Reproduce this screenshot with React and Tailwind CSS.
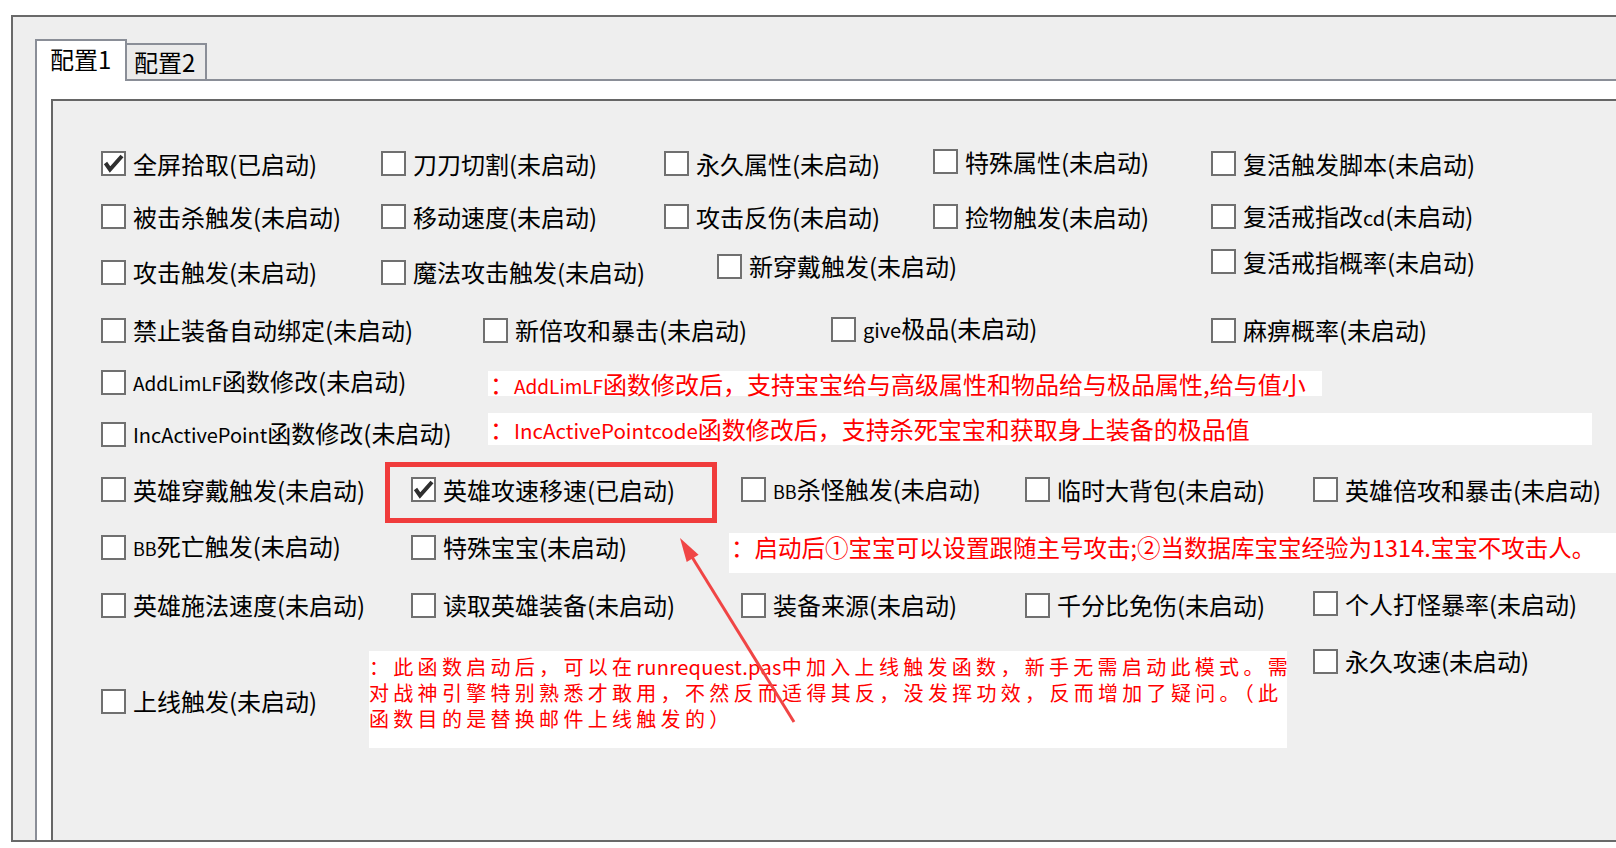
import React from "react";

function Item({ label, checked = false, className = "" }) {
  return (
    <div className={"flex items-center shrink-0 h-[32px] " + className}>
      <div className="relative w-[25px] h-[25px] shrink-0 border-2 border-[#707070] bg-white">
        {checked && (
          <svg width="25" height="25" viewBox="0 0 25 25" className="absolute -left-[2px] -top-[2px]">
            <polyline points="4.5,12 9,18.5 21,5" fill="none" stroke="#2f2f2f" strokeWidth="4" strokeLinejoin="miter" strokeLinecap="butt" />
          </svg>
        )}
      </div>
      <span className="ml-[7px] text-[24px] leading-[32px] text-black whitespace-nowrap">{label}</span>
    </div>
  );
}

export default function App() {
  return (
    <div className="relative w-[1616px] h-[848px] overflow-hidden bg-white font-['Noto_Sans_CJK_SC',sans-serif]">
      <div className="ml-[11px] mt-[15px] w-[1660px] h-[827px] border-2 border-[#696969] bg-[#eeeeee] pt-[22px] pl-[22px] flex flex-col">
        {/* tab header */}
        <div className="flex items-end h-[42px] shrink-0">
          <div className="w-[92px] h-[42px] bg-white border-l-2 border-t-2 border-r-2 border-[#8a8e97] pl-[13px] pt-[2px] text-[24px] leading-[32px] text-black whitespace-nowrap">
            配置1
          </div>
          <div className="w-[80px] h-[38px] bg-[#ebebeb] border-t-2 border-r-2 border-b-2 border-[#8a8e97] pl-[7px] pt-[1px] text-[24px] leading-[32px] text-black whitespace-nowrap">
            配置2
          </div>
          <div className="flex-1 h-[2px] bg-[#8a8e97]" />
        </div>
        {/* panel */}
        <div className="flex-1 flex flex-col bg-white border-l-2 border-[#8a8e97] pt-[18px] pl-[14px]">
          <div className="flex-1 border-t-2 border-l-2 border-[#666666] bg-[#efefef] pt-[36px] flex flex-col">
            {/* row 1 */}
            <div className="flex items-center h-[53px] pl-[48px] shrink-0">
              <Item label="全屏拾取(已启动)" checked className="w-[280px]" />
              <Item label="刀刀切割(未启动)" className="w-[283px]" />
              <Item label="永久属性(未启动)" className="w-[269px]" />
              <Item label="特殊属性(未启动)" className="w-[278px] mb-[4px]" />
              <Item label="复活触发脚本(未启动)" />
            </div>
            {/* row 2 */}
            <div className="flex items-center h-[53px] pl-[48px] shrink-0">
              <Item label="被击杀触发(未启动)" className="w-[280px]" />
              <Item label="移动速度(未启动)" className="w-[283px]" />
              <Item label="攻击反伤(未启动)" className="w-[269px]" />
              <Item label="捡物触发(未启动)" className="w-[278px]" />
              <Item label={<>复活戒指改<span className="text-[20px]">cd</span>(未启动)</>} />
            </div>
            {/* row 3 */}
            <div className="flex items-center h-[58px] pl-[48px] shrink-0">
              <Item label="攻击触发(未启动)" className="w-[280px]" />
              <Item label="魔法攻击触发(未启动)" className="w-[336px]" />
              <Item label="新穿戴触发(未启动)" className="w-[494px] mb-[12px]" />
              <Item label="复活戒指概率(未启动)" className="mb-[21px]" />
            </div>
            {/* row 4 */}
            <div className="flex items-center h-[56px] pl-[48px] shrink-0">
              <Item label="禁止装备自动绑定(未启动)" className="w-[382px] mt-[2px]" />
              <Item label="新倍攻和暴击(未启动)" className="w-[348px] mt-[2px]" />
              <Item label={<><span className="text-[20px]">give</span>极品(未启动)</>} className="w-[380px]" />
              <Item label="麻痹概率(未启动)" className="mt-[2px]" />
            </div>
            {/* row 5 */}
            <div className="flex items-center h-[50px] pl-[48px] shrink-0">
              <Item label={<><span className="text-[19px]">AddLimLF</span>函数修改(未启动)</>} className="w-[387px]" />
              <div className="w-[834px] h-[25px] shrink-0 bg-white mt-[3px] pl-[2px] text-[#ff0000] text-[24px] leading-[25px] whitespace-nowrap">
                ：<span className="text-[19px]">AddLimLF</span>函数修改后，支持宝宝给与高级属性和物品给与极品属性,给与值小
              </div>
            </div>
            {/* row 6 */}
            <div className="flex items-center h-[54px] pl-[48px] shrink-0">
              <Item label={<><span className="text-[20px]">IncActivePoint</span>函数修改(未启动)</>} className="w-[387px]" />
              <div className="w-[1104px] h-[32px] shrink-0 bg-white mb-[10px] pl-[2px] text-[#ff0000] text-[24px] leading-[32px] whitespace-nowrap">
                ：<span className="text-[20.5px]">IncActivePointcode</span>函数修改后，支持杀死宝宝和获取身上装备的极品值
              </div>
            </div>
            {/* row 7 */}
            <div className="flex items-center h-[57px] pl-[48px] shrink-0">
              <Item label="英雄穿戴触发(未启动)" className="w-[310px]" />
              <Item label="英雄攻速移速(已启动)" checked className="w-[330px]" />
              <Item label={<><span className="text-[18px]">BB</span>杀怪触发(未启动)</>} className="w-[284px]" />
              <Item label="临时大背包(未启动)" className="w-[288px]" />
              <Item label="英雄倍攻和暴击(未启动)" />
            </div>
            {/* row 8 */}
            <div className="flex items-center h-[58px] pl-[48px] shrink-0">
              <Item label={<><span className="text-[18px]">BB</span>死亡触发(未启动)</>} className="w-[310px]" />
              <Item label="特殊宝宝(未启动)" className="w-[318px]" />
              <div className="w-[900px] h-[40px] shrink-0 bg-white mt-[12px] pl-[2px] text-[#ff0000] text-[23.5px] leading-[28px] whitespace-nowrap">
                ：启动后①宝宝可以设置跟随主号攻击;②当数据库宝宝经验为1314.宝宝不攻击人。
              </div>
            </div>
            {/* row 9 */}
            <div className="flex items-center h-[58px] pl-[48px] shrink-0">
              <Item label="英雄施法速度(未启动)" className="w-[310px]" />
              <Item label="读取英雄装备(未启动)" className="w-[330px]" />
              <Item label="装备来源(未启动)" className="w-[284px]" />
              <Item label="千分比免伤(未启动)" className="w-[288px]" />
              <Item label="个人打怪暴率(未启动)" className="mb-[3px]" />
            </div>
            {/* row 10 */}
            <div className="flex items-start pl-[48px] shrink-0">
              <Item label="上线触发(未启动)" className="w-[268px] mt-[51px]" />
              <div className="w-[918px] h-[97px] shrink-0 bg-white mt-[17px] pt-[3px] text-[#ff0000] text-[20px] leading-[26px] tracking-[4.3px] whitespace-nowrap">
                <div>
                  ：此函数启动后，可以在<span className="tracking-[0.3px]">runrequest.pas</span>中加入上线触发函数，新手无需启动此模式。需
                </div>
                <div>对战神引擎特别熟悉才敢用，不然反而适得其反，没发挥功效，反而增加了疑问。（此</div>
                <div>函数目的是替换邮件上线触发的）</div>
              </div>
              <Item label="永久攻速(未启动)" className="ml-[26px] mt-[11px]" />
            </div>
          </div>
        </div>
      </div>

      {/* annotation overlays */}
      <div className="absolute left-[385px] top-[462px] w-[332px] h-[61px] border-[5px] border-[#f03c3c] pointer-events-none" />
      <svg className="absolute left-0 top-0 pointer-events-none" width="1616" height="848">
        <line x1="692" y1="557" x2="794" y2="722" stroke="#f04545" strokeWidth="3" />
        <polygon points="680,538 686.7,562.1 698.6,554.7" fill="#f04545" />
      </svg>
    </div>
  );
}
